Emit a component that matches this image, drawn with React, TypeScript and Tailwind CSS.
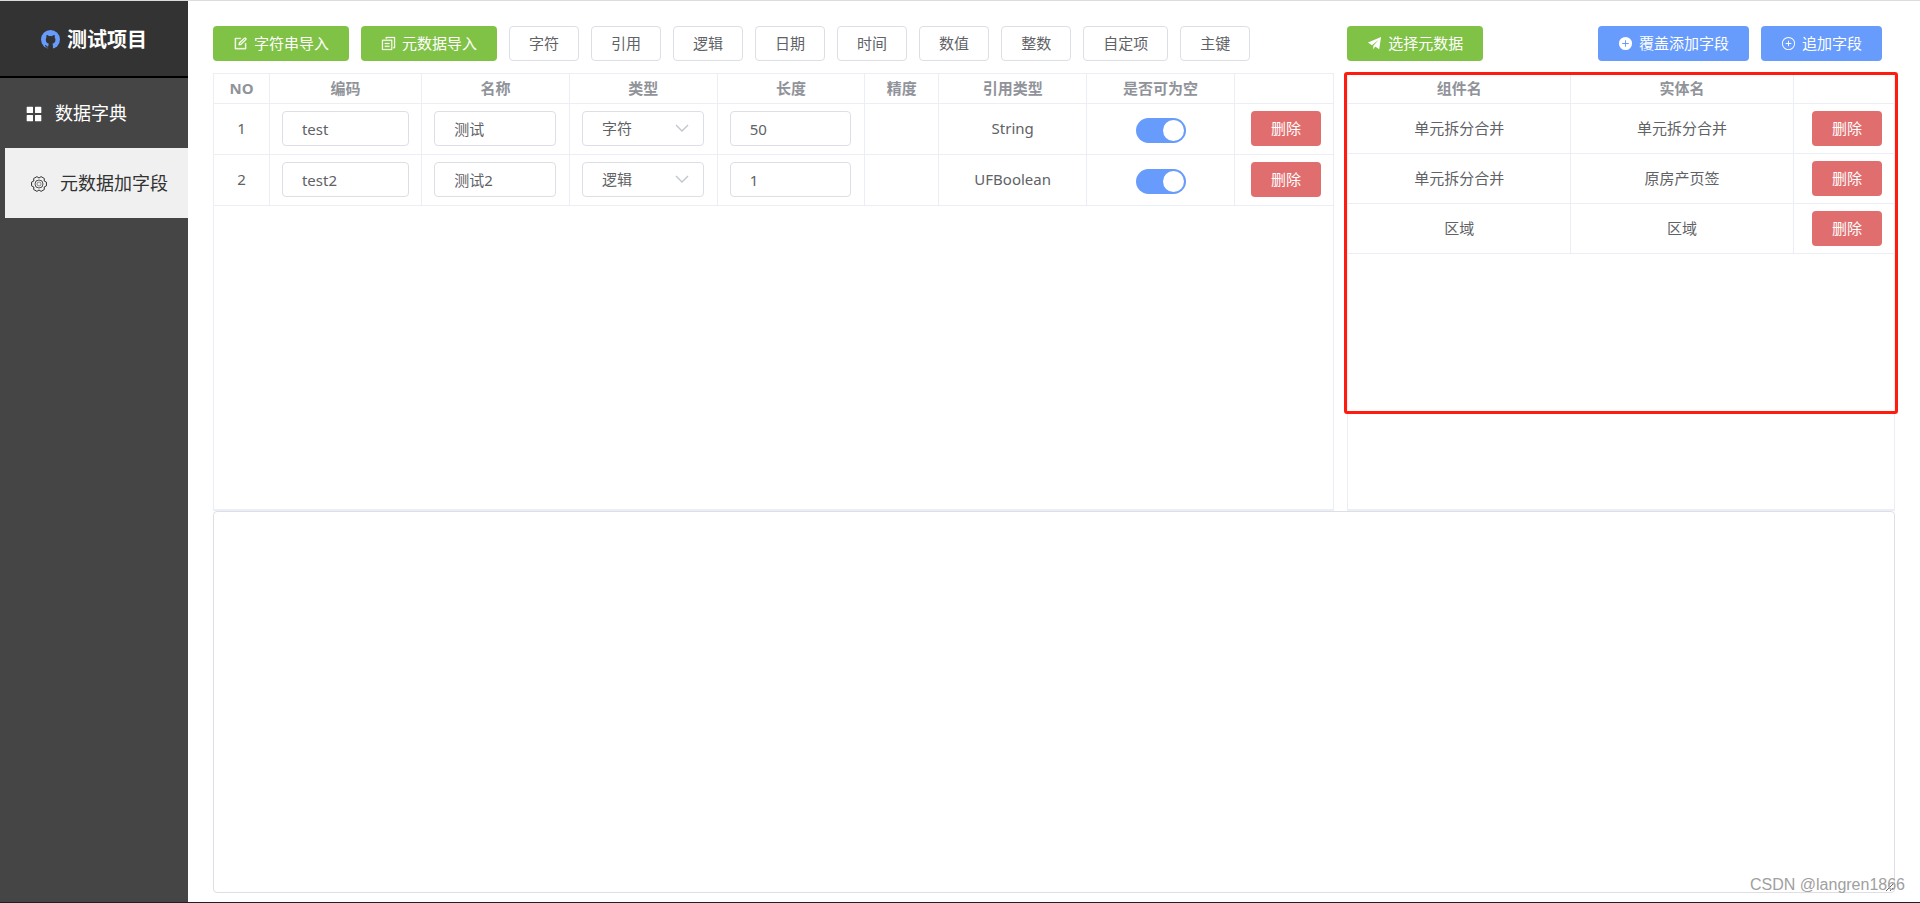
import React, { useState } from "react";

type Field = { code: string; name: string; type: string; length: string; ref: string };

const initialFields: Field[] = [
  { code: "test", name: "测试", type: "字符", length: "50", ref: "String" },
  { code: "test2", name: "测试2", type: "逻辑", length: "1", ref: "UFBoolean" },
];

const entities = [
  ["单元拆分合并", "单元拆分合并"],
  ["单元拆分合并", "原房产页签"],
  ["区域", "区域"],
];

const types = ["字符", "引用", "逻辑", "日期", "时间", "数值", "整数", "自定项", "主键"];

function Icon({ d, className, outline = 0 }: { d: string; className: string; outline?: number }) {
  return (
    <svg
      viewBox="0 0 1024 1024"
      className={className}
      fill="currentColor"
      stroke="currentColor"
      strokeWidth={outline}
      aria-hidden="true"
    >
      <path fillRule="evenodd" d={d} />
    </svg>
  );
}

function GithubIcon() {
  return (
    <svg viewBox="0 0 57 57" className="size-[19px]" aria-hidden="true">
      <circle cx="28.500" cy="28.500" r="28.500" fill="#679bfc" />
      <path
        fill="#333"
        transform="translate(3.400 4) scale(.88 .96)"
        d="M15 12c3-1 6 1 8.500 3 3.500-1 7-1 10.500 0 2.500-2 5.500-4 8.500-3 1 3 1 5 .3 7 1.700 2 2.500 4.500 2.500 7.500 0 8-4.500 11.500-10.500 12.500 1.500 1.500 2 3.500 2 6v12H20.500v-6c-5 1-7.500-1-9-4.500-.7-1.500-1.500-2.500-3-3.500 3.500-1.500 5.500 1 7 3 1.500 2 3 2 5.200 1.500.2-3.500.8-5.500 2.300-8.500-6-1-10.500-4.500-10.500-12.500 0-3 .8-5.500 2.300-7.500-.7-2-.7-4 .2-7z"
      />
    </svg>
  );
}

function GearIcon() {
  return (
    <svg viewBox="0 0 48 48" className="mx-px size-4" fill="none" stroke="currentColor" strokeWidth="3" strokeLinejoin="round" aria-hidden="true">
      <path d="M46.300 18.400V29.600L39.600 33 40 40.500 30.300 46.100 24 42 17.700 46.100 8 40.500 8.400 33 1.700 29.600V18.400L8.400 15 8 7.500 17.700 1.900 24 6 30.300 1.900 40 7.500 39.600 15z" />
      <circle cx="24" cy="24" r="12" strokeWidth="2.500" />
      <circle cx="24" cy="24" r="6" strokeWidth="1.500" />
    </svg>
  );
}

const paths = {
  menu: "M128 96h296q32 0 32 32v296q0 32-32 32H128q-32 0-32-32V128q0-32 32-32zM600 96h296q32 0 32 32v296q0 32-32 32H600q-32 0-32-32V128q0-32 32-32zM128 568h296q32 0 32 32v296q0 32-32 32H128q-32 0-32-32V600q0-32 32-32zM600 568h296q32 0 32 32v296q0 32-32 32H600q-32 0-32-32V600q0-32 32-32z",
  edit: "M832 512a32 32 0 1 1 64 0v352a32 32 0 0 1-32 32H160a32 32 0 0 1-32-32V160a32 32 0 0 1 32-32h352a32 32 0 0 1 0 64H192v640h640V512zM470 554l52.800-7.600L847 222.200a32 32 0 1 0-45.200-45.200L477.400 501.400 470 554zM892.400 131.800a96 96 0 0 1 0 135.800L560.500 599.500a32 32 0 0 1-18 9L422.400 625.600a32 32 0 0 1-36.200-36.200l17.200-120a32 32 0 0 1 9-18L756.600 131.800a96 96 0 0 1 135.800 0z",
  copy: "M128 320v576h576V320H128zm-32-64h640a32 32 0 0 1 32 32v640a32 32 0 0 1-32 32H96a32 32 0 0 1-32-32V288a32 32 0 0 1 32-32zM960 96v704a32 32 0 0 1-32 32h-96v-64h64V128H384v64h-64V96a32 32 0 0 1 32-32h576a32 32 0 0 1 32 32zM256 480h320v64H256zM256 672h320v64H256z",
  plane: "M64 448 960 64 832 896 560 720 432 928V672L800 256 336 624z",
  plusSolid: "M512 64a448 448 0 1 1 0 896 448 448 0 0 1 0-896zM480 480H288v64h192v192h64V544h192v-64H544V288h-64z",
  plusLine:
    "M512 64a448 448 0 1 1 0 896 448 448 0 0 1 0-896zM512 128a384 384 0 1 0 0 768 384 384 0 0 0 0-768zM480 480H320v64h160v160h64V544h160v-64H544V320h-64z",
};

function Action({ icon, outline, tone, children }: { icon: string; outline?: number; tone: string; children: React.ReactNode }) {
  return (
    <button type="button" className={`flex h-[35px] shrink-0 items-center gap-1.5 rounded px-5 text-[15px] text-white ${tone}`}>
      <Icon d={icon} outline={outline} className="size-[15px]" />
      {children}
    </button>
  );
}

function DeleteButton() {
  return (
    <button type="button" className="h-[35px] w-[70px] rounded bg-[#e06e6e] text-[15px] text-white">
      删除
    </button>
  );
}

function Head({ children, className = "" }: { children?: React.ReactNode; className?: string }) {
  return <th className={`h-[30px] border-b border-r border-[#ebeef5] p-0 font-bold text-[#909399] ${className}`}>{children}</th>;
}

function Cell({ children, className = "" }: { children?: React.ReactNode; className?: string }) {
  return <td className={`border-b border-r border-[#ebeef5] pb-px pt-0 text-center ${className}`}>{children}</td>;
}

const box = "block h-[35px] w-full rounded border border-[#dcdfe6] bg-white px-[19px] text-[15px] text-[#606266] outline-none";

function FieldRow({ field, index }: { field: Field; index: number }) {
  const [nullable, setNullable] = useState(true);
  return (
    <tr className="h-[51px]">
      <Cell>{index}</Cell>
      <Cell className="px-3">
        <input aria-label="编码" className={box} defaultValue={field.code} />
      </Cell>
      <Cell className="pl-3 pr-[13px]">
        <input aria-label="名称" className={box} defaultValue={field.name} />
      </Cell>
      <Cell className="pl-3 pr-[13px]">
        <div className="relative">
          <select aria-label="类型" defaultValue={field.type} className={`${box} appearance-none`}>
            {types.map((t) => (
              <option key={t}>{t}</option>
            ))}
          </select>
          <svg viewBox="0 0 14 14" className="pointer-events-none absolute right-[15px] top-2.5 size-3.5" fill="none" stroke="#c0c4cc" strokeWidth="1.300" aria-hidden="true">
            <path d="M1 4l6 6 6-6" />
          </svg>
        </div>
      </Cell>
      <Cell className="pl-3 pr-[13px]">
        <input aria-label="长度" className={box} defaultValue={field.length} />
      </Cell>
      <Cell />
      <Cell>{field.ref}</Cell>
      <Cell className="pl-0.5">
        <label className="relative mt-1 inline-flex h-[25px] w-[50px] align-middle">
          <input
            type="checkbox"
            role="switch"
            aria-label="是否可为空"
            checked={nullable}
            onChange={(e) => setNullable(e.target.checked)}
            className="peer size-full appearance-none rounded-full bg-[#dcdfe6] checked:bg-[#679bfc]"
          />
          <span className="pointer-events-none absolute left-0.5 top-0.5 size-[21px] rounded-full bg-white peer-checked:left-[27px]" />
        </label>
      </Cell>
      <Cell className="border-r-0 pl-1">
        <DeleteButton />
      </Cell>
    </tr>
  );
}

export default function App() {
  return (
    <div className="relative flex min-h-screen border-b border-t border-b-[#221f24] border-t-[#dcdcdc] bg-white font-['Noto_Sans','Noto_Sans_CJK_SC',sans-serif] text-[15px] text-[#606266]">
      <aside className="w-[188px] shrink-0 bg-[#454545]">
        <h1 className="flex h-[77px] items-center justify-center gap-[7px] border-b-2 border-black bg-[#333] pt-0.5 text-[20px] font-bold text-white">
          <GithubIcon />
          测试项目
        </h1>
        <nav className="text-[18px]">
          <a href="#dictionary" className="flex h-[70px] items-center gap-3 pl-[25px] pt-px text-white">
            <Icon d={paths.menu} className="size-[18px]" />
            数据字典
          </a>
          <a href="#fields" className="ml-[5px] flex h-[70px] items-center gap-3 bg-[#f0f0f0] pl-[25px] pt-px text-[#333]">
            <GearIcon />
            元数据加字段
          </a>
        </nav>
      </aside>

      <main className="flex min-w-0 flex-1 flex-col px-[25px] pb-[9px] pt-[25px]">
        <div className="flex">
          <section className="w-2/3">
            <div className="flex gap-3">
              <Action icon={paths.edit} outline={24} tone="bg-[#80c246]">字符串导入</Action>
              <Action icon={paths.copy} outline={16} tone="bg-[#80c246]">元数据导入</Action>
              {types.map((t) => (
                <button key={t} type="button" className="h-[35px] shrink-0 rounded border border-[#dcdfe6] bg-white px-[19px] text-[15px]">
                  {t}
                </button>
              ))}
            </div>
            <div className="mt-3 h-[438px] border border-b-2 border-[#ebeef5]">
              <table className="w-full table-fixed border-separate border-spacing-0">
                <colgroup>
                  <col className="w-[5%]" />
                  <col className="w-[13.600%]" />
                  <col className="w-[13.200%]" />
                  <col className="w-[13.200%]" />
                  <col className="w-[13.200%]" />
                  <col className="w-[6.600%]" />
                  <col className="w-[13.200%]" />
                  <col className="w-[13.200%]" />
                  <col />
                </colgroup>
                <thead>
                  <tr>
                    {["NO", "编码", "名称", "类型", "长度", "精度", "引用类型", "是否可为空", ""].map((h, i) => (
                      <Head key={i} className="last:border-r-0">{h}</Head>
                    ))}
                  </tr>
                </thead>
                <tbody>
                  {initialFields.map((f, i) => (
                    <FieldRow key={f.code} field={f} index={i + 1} />
                  ))}
                </tbody>
              </table>
            </div>
          </section>

          <section className="w-1/3 pl-[13px]">
            <div className="flex gap-3 pr-[13px]">
              <Action icon={paths.plane} tone="mr-auto bg-[#80c246]">选择元数据</Action>
              <Action icon={paths.plusSolid} tone="bg-[#679bfc]">覆盖添加字段</Action>
              <Action icon={paths.plusLine} tone="bg-[#679bfc]">追加字段</Action>
            </div>
            <div className="relative mt-3 h-[438px] border border-b-2 border-[#ebeef5]">
              <table className="w-full table-fixed border-separate border-spacing-0">
                <colgroup>
                  <col />
                  <col />
                  <col className="w-[100px]" />
                </colgroup>
                <thead>
                  <tr>
                    {["组件名", "实体名", ""].map((h, i) => (
                      <Head key={i} className="last:border-r-0">{h}</Head>
                    ))}
                  </tr>
                </thead>
                <tbody>
                  {entities.map(([component, entity], i) => (
                    <tr key={i} className="h-[50px]">
                      <Cell>{component}</Cell>
                      <Cell>{entity}</Cell>
                      <Cell className="border-r-0 pl-1.5">
                        <DeleteButton />
                      </Cell>
                    </tr>
                  ))}
                </tbody>
              </table>
              <div className="pointer-events-none absolute -left-1 -right-1 -top-0.5 h-[342px] rounded-[3px] border-[3px] border-[#ff1c0f]" />
            </div>
          </section>
        </div>
        <textarea aria-label="输出" className="block w-full flex-1 rounded border border-[#dcdfe6] bg-white px-5 py-2 text-[15px] outline-none" />
      </main>

      <div className="pointer-events-none absolute bottom-[5px] right-[15px] font-['Liberation_Sans',sans-serif] text-[16px] text-[#a0a0a0]">
        CSDN @langren1866
      </div>
    </div>
  );
}
